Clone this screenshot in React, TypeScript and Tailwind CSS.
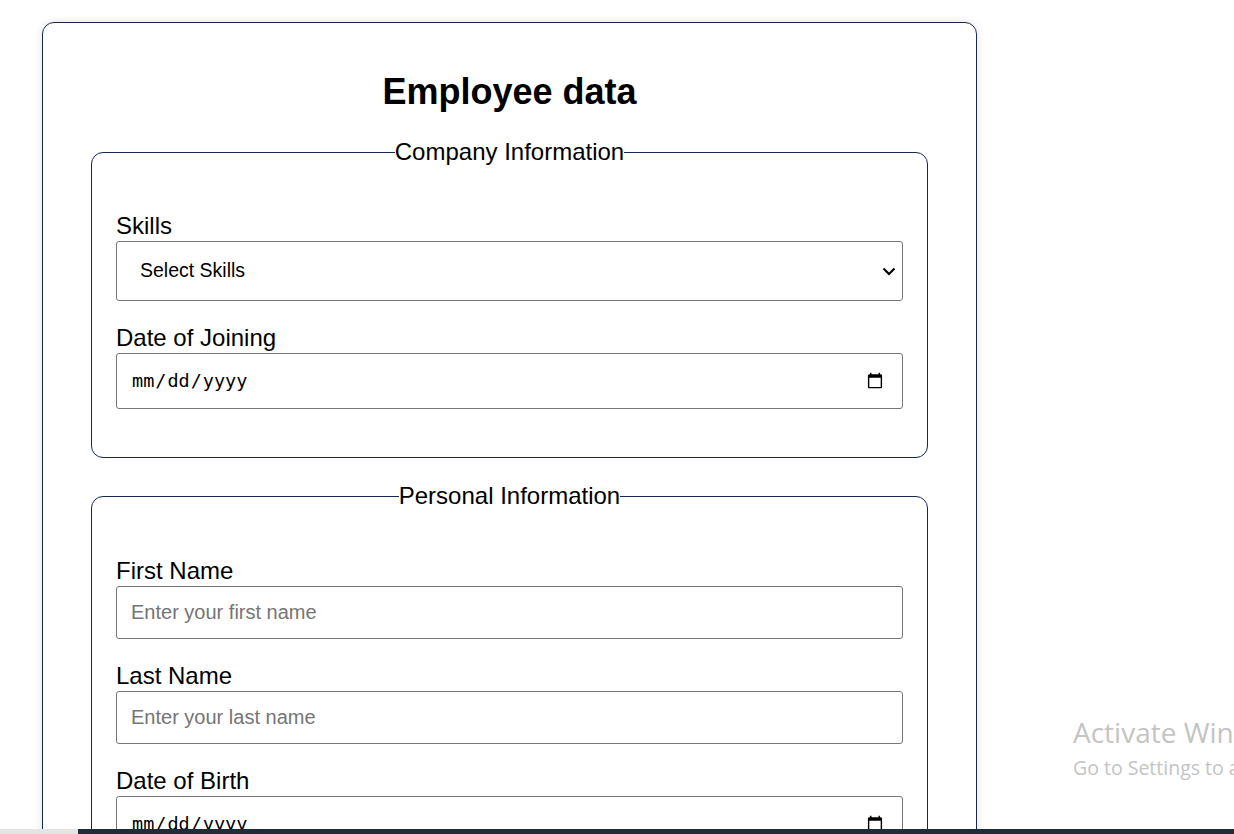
import type { ReactNode } from 'react'

function Field({ label, children }: { label: string; children: ReactNode }) {
  return (
    <div className="flex flex-col">
      <label className="mb-[2px] text-[24px] leading-[26px]">{label}</label>
      {children}
    </div>
  )
}

function Section({
  title,
  className,
  children,
}: {
  title: string
  className: string
  children: ReactNode
}) {
  return (
    <fieldset
      className={`rounded-[12px] border border-[#1a2750] px-[24px] pb-[48px] ${className}`}
    >
      <legend className="mx-auto px-0 text-[24px] leading-[26px]">{title}</legend>
      <div className="flex flex-col gap-[24px]">{children}</div>
    </fieldset>
  )
}

const textInput =
  'h-[53px] w-full rounded-[3px] border border-[#767676] bg-white px-[14px] text-[20px] outline-none placeholder:text-[#757575]'

const dateInput =
  "h-[56px] w-full rounded-[3px] border border-[#767676] bg-white pl-[14px] pr-[16px] font-['DejaVu_Sans_Mono',monospace] text-[18.5px] outline-none"

export default function App() {
  return (
    <div className="relative h-[834px] overflow-hidden bg-white font-['Liberation_Sans',Arial,sans-serif] text-black">
      <div className="ml-[42px] mt-[22px] w-[935px] rounded-[12px] border border-[#1a2750] px-[48px] pt-[48px] pb-[48px] shadow-[0_0_8px_rgba(0,0,0,0.12)]">
        <h1 className="text-center text-[36px] font-bold leading-[41px]">Employee data</h1>

        <Section title="Company Information" className="mt-[27px] pt-[48px]">
          <Field label="Skills">
            <div className="relative">
              <select
                defaultValue=""
                className="h-[60px] w-full appearance-none rounded-[3px] border border-[#767676] bg-white pl-[23px] pr-[30px] text-[19.5px] outline-none"
              >
                <option value="">Select Skills</option>
                <option value="react">React</option>
                <option value="node">Node.js</option>
                <option value="python">Python</option>
              </select>
              <svg
                className="pointer-events-none absolute right-[7px] top-[26px]"
                width="14"
                height="9"
                viewBox="0 0 14 9"
                fill="none"
              >
                <path d="M1.5 1.5 L7 7 L12.5 1.5" stroke="#000" strokeWidth="2.2" />
              </svg>
            </div>
          </Field>
          <Field label="Date of Joining">
            <input type="date" className={dateInput} />
          </Field>
        </Section>

        <Section title="Personal Information" className="mt-[25px] pt-[49px]">
          <Field label="First Name">
            <input type="text" placeholder="Enter your first name" className={textInput} />
          </Field>
          <Field label="Last Name">
            <input type="text" placeholder="Enter your last name" className={textInput} />
          </Field>
          <Field label="Date of Birth">
            <input type="date" className={dateInput} />
          </Field>
          <Field label="Email">
            <input type="email" placeholder="Enter your email" className={textInput} />
          </Field>
        </Section>
      </div>

      {/* windows watermark */}
      <div className="pointer-events-none absolute left-[1073px] top-[716px] whitespace-nowrap font-['Open_Sans',sans-serif] text-[#c4c4c4]">
        <div className="text-[28px] leading-[32px]">Activate Windows</div>
        <div className="mt-[8px] text-[19.5px] leading-[24px]">Go to Settings to activate Windows.</div>
      </div>

      {/* taskbar edge */}
      <div className="absolute bottom-0 left-0 right-0 flex h-[5px]">
        <div className="w-[78px] bg-[#e4e4e4]" />
        <div className="flex-1 bg-[#1f2d3a]" />
      </div>
    </div>
  )
}
